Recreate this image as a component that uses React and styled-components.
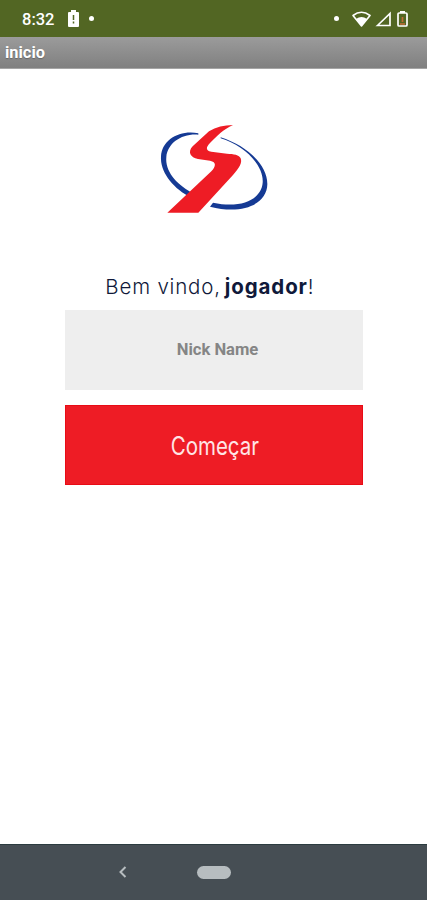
import React from 'react';
import styled, { createGlobalStyle } from 'styled-components';

const GlobalStyle = createGlobalStyle`
    * {
        box-sizing: border-box;
    }

    body {
        margin: 0;
        background: #fff;
        font-family: Roboto, sans-serif;
    }
`;
const Screen = styled.div`
    height: 100vh;
    display: flex;
    flex-direction: column;
    overflow: hidden;
`;
const StatusBar = styled.header`
    height: 37px;
    padding: 0 19px 0 22px;
    display: flex;
    align-items: center;
    justify-content: space-between;
    background: #526623;
    color: #fff;
`;
const StatusGroup = styled.div`
    height: 37px;
    display: flex;
    align-items: center;
`;
const Clock = styled.span`
    width: 33px;
    margin-right: 12px;
    font-size: 16.5px;
    font-weight: 500;
    line-height: 20px;
    padding-top: 2px;
`;
const Dot = styled.i`
    width: 5px;
    height: 5px;
    margin: 0 ${(props) => props.$after || 0}px 0 ${(props) => props.$before || 0}px;
    border-radius: 50%;
    background: #fff;
`;
const TitleBar = styled.div`
    height: 32px;
    padding: 0 5px;
    border-bottom: 1px solid #a5a5a5;
    background: linear-gradient(#9b9b9b, #808080);
    color: #fff;
    font-size: 16.4px;
    font-weight: 700;
    line-height: 32px;
    text-shadow: 0 1px 1px #666;
`;
const Content = styled.main`
    flex: 1;
    display: flex;
    flex-direction: column;
    align-items: center;
    padding-top: 46px;
`;
const Welcome = styled.h1`
    height: 30px;
    margin: 47px 0 0;
    padding-right: 8px;
    display: flex;
    align-items: center;
    color: #10193a;
    font-family: Inter, sans-serif;
    font-size: 20.5px;
    font-weight: 300;
    line-height: 30px;
`;
const Greeting = styled.span`
    margin-right: 4px;
    letter-spacing: 0.8px;
`;
const Player = styled.strong`
    font-weight: 700;
    letter-spacing: 0.9px;
`;
const NickInput = styled.input`
    width: 298px;
    height: 80px;
    margin: 8px 0 15px;
    padding: 0 0 2px 8px;
    border: none;
    border-radius: 0;
    outline: none;
    background: #eee;
    font-family: Roboto, sans-serif;
    font-size: 16.6px;
    font-weight: 700;
    text-align: center;

    &::placeholder {
        color: #858585;
        opacity: 1;
    }
`;
const StartButton = styled.button`
    width: 298px;
    height: 80px;
    padding: 1px 0 0 2px;
    border: 1px solid #e80b15;
    background: #ee1c25;
    color: #ffe5e5;
    font-family: Inter, sans-serif;
    font-size: 25px;
    font-weight: 400;
    cursor: pointer;
`;
const ButtonLabel = styled.span`
    display: inline-block;
    transform: scaleX(0.82);
`;
const NavigationBar = styled.footer`
    height: 56px;
    padding-bottom: 1px;
    border-top: 1px solid #2c3c40;
    display: grid;
    grid-template-columns: 117px 12px 68px 34px;
    align-items: center;
    background: #464e54;
`;
const BackIcon = styled.svg`
    grid-column: 2;
`;
const HomePill = styled.span`
    grid-column: 4;
    height: 13px;
    border-radius: 7px;
    background: #b7bdc0;
`;

const Logo = () => (
    <svg width="130" height="110" viewBox="-3 0 390 330">
        <path
            fill="#153a94"
            d="M145 55C88 44 36 75 33 124C30 169 65 215 114 243L125 233C76 205 45 167 49 126C53 84 95 55 145 59Z"
        />
        <path
            fill="#153a94"
            d="M212 67C288 91 353 148 352 208C351 266 280 301 180 275L189 263C274 282 334 253 338 203C342 147 277 89 212 70Z"
        />
        <path
            fill="#ee1c25"
            d="M249 30C222 30 198 36 177 49L128 94C112 111 121 128 144 132L180 137C201 141 197 155 184 169L52 293H145L249 180C269 158 277 143 272 130C268 119 251 117 231 116L184 110C166 107 168 96 180 84C200 64 220 43 249 30Z"
        />
    </svg>
);

const App = () => {
    return (
        <Screen>
            <GlobalStyle />
            <StatusBar>
                <StatusGroup>
                    <Clock>8:32</Clock>
                    <svg width="13" height="17" viewBox="0 0 13 17">
                        <path fill="#fff" d="M4 0h5v2h2q1 0 1 1v13q0 1-1 1H2q-1 0-1-1V3q0-1 1-1h2z" />
                        <path stroke="#526623" strokeWidth="1.5" d="M6.5 5v5m0 1.5v2" />
                    </svg>
                    <Dot $before={9} />
                </StatusGroup>
                <StatusGroup>
                    <Dot $after={13} />
                    <svg width="56" height="18" viewBox="0 0 56 18">
                        <path
                            fill="none"
                            stroke="#fff"
                            strokeWidth="1.6"
                            strokeLinejoin="round"
                            d="M1 5.5Q9.5-1 18 5.5L9.5 16Z"
                        />
                        <path fill="#fff" d="M4 9Q9.5 5 15 9L9.5 16Z" />
                        <path fill="none" stroke="#fff" strokeWidth="1.7" d="M25.5 15.5L38 3.5V15.5Z" />
                        <path fill="#fff" d="M48 1h5v2h-5z" />
                        <rect x="46" y="3" width="9" height="13" rx="1" fill="none" stroke="#fff" strokeWidth="1.7" />
                        <path stroke="#c36b36" strokeWidth="1.7" d="M50.5 7v5M48 14h5" />
                    </svg>
                </StatusGroup>
            </StatusBar>
            <TitleBar>inicio</TitleBar>
            <Content>
                <Logo />
                <Welcome>
                    <Greeting>Bem vindo,</Greeting>
                    <Player>jogador</Player>!
                </Welcome>
                <NickInput placeholder="Nick Name" aria-label="Nick Name" />
                <StartButton>
                    <ButtonLabel>Começar</ButtonLabel>
                </StartButton>
            </Content>
            <NavigationBar>
                <BackIcon width="12" height="14" viewBox="0 0 12 14">
                    <path d="M8.5 2L3.5 7l5 5" fill="none" stroke="#b7bdc0" strokeWidth="2" />
                </BackIcon>
                <HomePill />
            </NavigationBar>
        </Screen>
    );
};

export default App;
